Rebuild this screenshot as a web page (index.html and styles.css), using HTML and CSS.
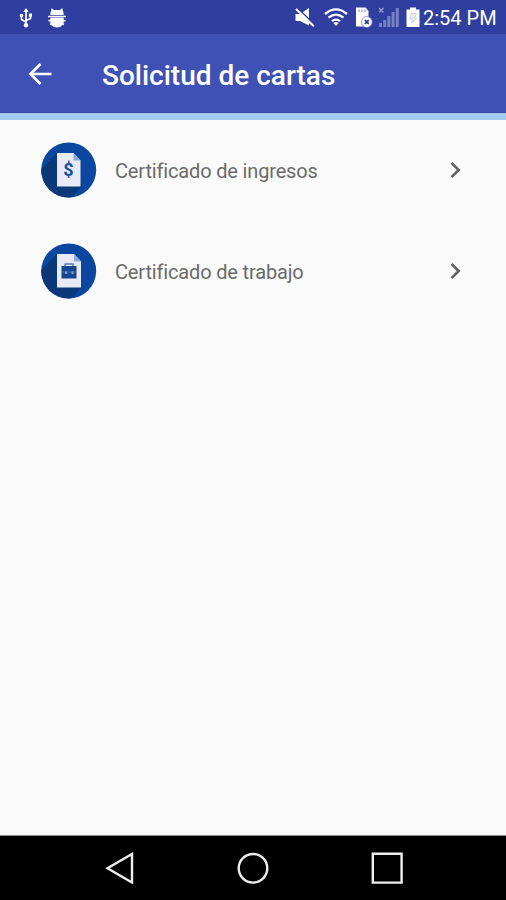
FILE: index.html
```
<!DOCTYPE html>
<html lang="es">
<head>
  <meta charset="UTF-8" />
  <meta name="viewport" content="width=device-width, initial-scale=1.0"/>
  <title>Solicitud de cartas</title>
  <link rel="stylesheet" href="styles.css">
</head>
<body>
  <div class="screen">
    <div class="status-bar">
      <!-- usb -->
      <svg class="icon-usb" width="14" height="20" viewBox="0 0 14 20">
        <path d="M7 3v14M2.500 8v3.500L7 14M11.500 8v2.500L7 12.500" fill="none" stroke="#fff" stroke-width="1.700"/>
        <path d="M7 0l2.700 4H4.300zM9.800 5.500h3.200v3.300H9.800z" fill="#fff"/>
        <circle cx="2.500" cy="7.500" r="1.800" fill="#fff"/>
        <circle cx="7" cy="17.300" r="2.200" fill="#fff"/>
      </svg>
      <!-- debug android -->
      <svg class="icon-debug" width="20" height="20" viewBox="0 0 20 20" fill="#fff">
        <path d="M4.500 0l2.500 2h6l2.500-2 .2 2.500c.8 1.300 1 2.800 1 4.500H3.300c0-1.700.2-3.200 1-4.500zM1 7.700h18v1.500H1zM3.300 9.700h13.400v3.800c0 3-2.700 6-6.700 6s-6.700-3-6.700-6z"/>
        <path d="M1.500 12.700h17M3 16.500l3-1.500M17 16.500l-3-1.500" stroke="#fff" stroke-width="1.800"/>
      </svg>
      <div class="status-right">
        <!-- sound off -->
        <svg class="icon-mute" width="21" height="20" viewBox="0 0 21 20">
          <path d="M1.500 6h4.500L15 0v17.500L6 13H1.500z" fill="#fff"/>
          <path d="M4 .5L21 17" stroke="#303f9f" stroke-width="1.600"/>
          <path d="M2 1L19.800 18.300" stroke="#fff" stroke-width="2"/>
        </svg>
        <!-- wifi -->
        <svg class="icon-wifi" width="24" height="20" viewBox="0 0 24 20">
          <path d="M1 6Q12-3.300 23 6M4.500 9.700Q12 3.500 19.500 9.700M8 13.200Q12 10 16 13.200" fill="none" stroke="#fff" stroke-width="2.300"/>
          <path d="M9.300 15q2.700-2 5.400 0L12 18z" fill="#fff"/>
        </svg>
        <!-- card -->
        <svg class="icon-card" width="18" height="21" viewBox="0 0 18 21">
          <path d="M1 .5h9.500L13.500 4v15.500H1z" fill="#fff"/>
          <path d="M4 2.500v2.500M7 2.500v2.500M10 2.500v2.500" stroke="#7f89c9" stroke-width="1"/>
          <circle cx="11.800" cy="15" r="5.400" fill="#fff" stroke="#6973bc" stroke-width=".7"/>
          <path d="M9.900 13.100l3.800 3.800M13.700 13.100L9.900 16.900" stroke="#303f9f" stroke-width="1.800"/>
        </svg>
        <!-- no signal -->
        <svg class="icon-signal" width="22" height="21" viewBox="0 0 22 21">
          <path d="M1 1l4.500 4.500M5.500 1L1 5.500" stroke="#98a0d4" stroke-width="1.200"/>
          <path d="M1 16h3v4H1zM5.200 13h3v7h-3zM9.400 9h3v11h-3zM13.600 5h3v15h-3zM17.800 1h3v19h-3z" fill="#7780c4"/>
        </svg>
        <!-- battery -->
        <svg class="icon-battery" width="14" height="21" viewBox="0 0 14 21">
          <path d="M4 .5h6V2.500h3.500V20H.5V2.500H4z" fill="#fff"/>
          <path d="M5 6.500h5.500L8.500 11H11l-5.500 5 1-4H3.500z" fill="#e9e9ec" stroke="#c5c6cc" stroke-width=".7"/>
        </svg>
        <span class="clock">2:54 PM</span>
      </div>
    </div>

    <div class="toolbar">
      <svg class="back" width="24" height="24" viewBox="0 0 24 24">
        <path d="M12.500 2L2.500 12l10 10M2.500 12h21" fill="none" stroke="#fff" stroke-width="2.700"/>
      </svg>
      <h1>Solicitud de cartas</h1>
    </div>

    <div class="list">
      <div class="item">
        <svg class="badge" width="56" height="56" viewBox="0 0 56 56">
          <defs>
            <clipPath id="circle"><circle cx="27.700" cy="28" r="27.500"/></clipPath>
          </defs>
          <g clip-path="url(#circle)">
            <path d="M0 0h56v56H0z" fill="#0b47a1"/>
            <path d="M16 11L0 27v29h30l11-12z" fill="#0b3878"/>
          </g>
          <path d="M16 11h16.500l7 7.500V44.500H16z" fill="#e8eaf6"/>
          <path d="M32.500 11v7.500h7z" fill="#8da9dc"/>
          <text class="dollar" x="27.500" y="34">$</text>
        </svg>
        <span class="label">Certificado de ingresos</span>
        <svg class="chevron" width="12" height="18" viewBox="0 0 12 18">
          <path d="M1.500 1.800L8.700 9l-7.200 7.200" fill="none" stroke="#616161" stroke-width="2.600"/>
        </svg>
      </div>

      <div class="item">
        <svg class="badge" width="56" height="56" viewBox="0 0 56 56">
          <g clip-path="url(#circle)">
            <path d="M0 0h56v56H0z" fill="#0b47a1"/>
            <path d="M16 11L0 27v29h30l11-12z" fill="#0b3878"/>
          </g>
          <path d="M16 11h17l7 7.500V44.500H16z" fill="#e8eaf6"/>
          <path d="M33 11v7.500h7z" fill="#8da9dc"/>
          <path d="M24 23.500v-2.500h8v2.500" fill="none" stroke="#5478b4" stroke-width="1.400"/>
          <path d="M20.500 23h15v12.500h-15z" fill="#17478f"/>
          <path d="M20.500 29h15" stroke="#4d73b0" stroke-width="1"/>
          <path d="M24 28.500h2v2.500h-2zM30.500 28.500h2v2.500h-2z" fill="#7f9bcb"/>
        </svg>
        <span class="label">Certificado de trabajo</span>
        <svg class="chevron" width="12" height="18" viewBox="0 0 12 18">
          <path d="M1.500 1.800L8.700 9l-7.200 7.200" fill="none" stroke="#616161" stroke-width="2.600"/>
        </svg>
      </div>
    </div>

    <div class="nav-bar">
      <svg width="32" height="32" viewBox="0 0 32 32"><path d="M29 2v28.500L4.500 16.200z"/></svg>
      <svg width="32" height="32" viewBox="0 0 32 32"><circle cx="16" cy="16.300" r="14.300"/></svg>
      <svg width="32" height="32" viewBox="0 0 32 32"><path d="M1.800 1.800h28.800v28.800H1.800z"/></svg>
    </div>
  </div>
</body>
</html>
```
FILE: styles.css
```
body {
  margin: 0;
  font-family: Roboto, sans-serif;
  background-color: #fafafa;
}

svg {
  display: block;
  flex-shrink: 0;
}

.screen {
  display: flex;
  flex-direction: column;
  height: 900px;
  overflow: hidden;
}

.status-bar {
  display: flex;
  align-items: center;
  box-sizing: border-box;
  height: 34px;
  padding: 1px 9px 0 19px;
  background-color: #303f9f;
  color: #fff;
}

.icon-debug {
  margin-left: 14px;
}

.status-right {
  display: flex;
  align-items: center;
  margin-left: auto;
}

.icon-wifi {
  margin-left: 9px;
}

.icon-card {
  margin-left: 7px;
}

.icon-signal {
  margin-left: 5px;
}

.icon-battery {
  margin-left: 6px;
}

.clock {
  width: 74px;
  margin-left: 3px;
  font-size: 20px;
  line-height: 24px;
  white-space: nowrap;
}

.toolbar {
  display: flex;
  align-items: center;
  box-sizing: border-box;
  height: 86px;
  padding: 0 0 0 28px;
  background-color: #3f51b5;
  border-bottom: 7px solid #a3caef;
  box-shadow: inset 0 -1px 0 #35469f;
}

.toolbar h1 {
  margin: 4px 0 0 50px;
  color: #fff;
  font-size: 28px;
  font-weight: 500;
  line-height: 32px;
  white-space: nowrap;
}

.list {
  flex: 1;
  margin-top: -1px;
}

.item {
  display: flex;
  align-items: center;
  height: 101px;
  padding: 0 44px 0 41px;
}

.dollar {
  fill: #17509f;
  font-size: 18px;
  font-weight: 700;
  text-anchor: middle;
}

.label {
  flex: 1;
  margin: 2px 0 0 18px;
  color: #6b6b6b;
  font-size: 20px;
  letter-spacing: -0.16px;
  line-height: 24px;
}

.nav-bar {
  display: flex;
  justify-content: space-between;
  align-items: center;
  box-sizing: border-box;
  height: 65px;
  padding: 0 103px 0 103px;
  background-color: #000;
  border-top: 1px solid #8a8a8a;
}

.nav-bar svg {
  fill: none;
  stroke: #eee;
  stroke-width: 2.4;
}
```
